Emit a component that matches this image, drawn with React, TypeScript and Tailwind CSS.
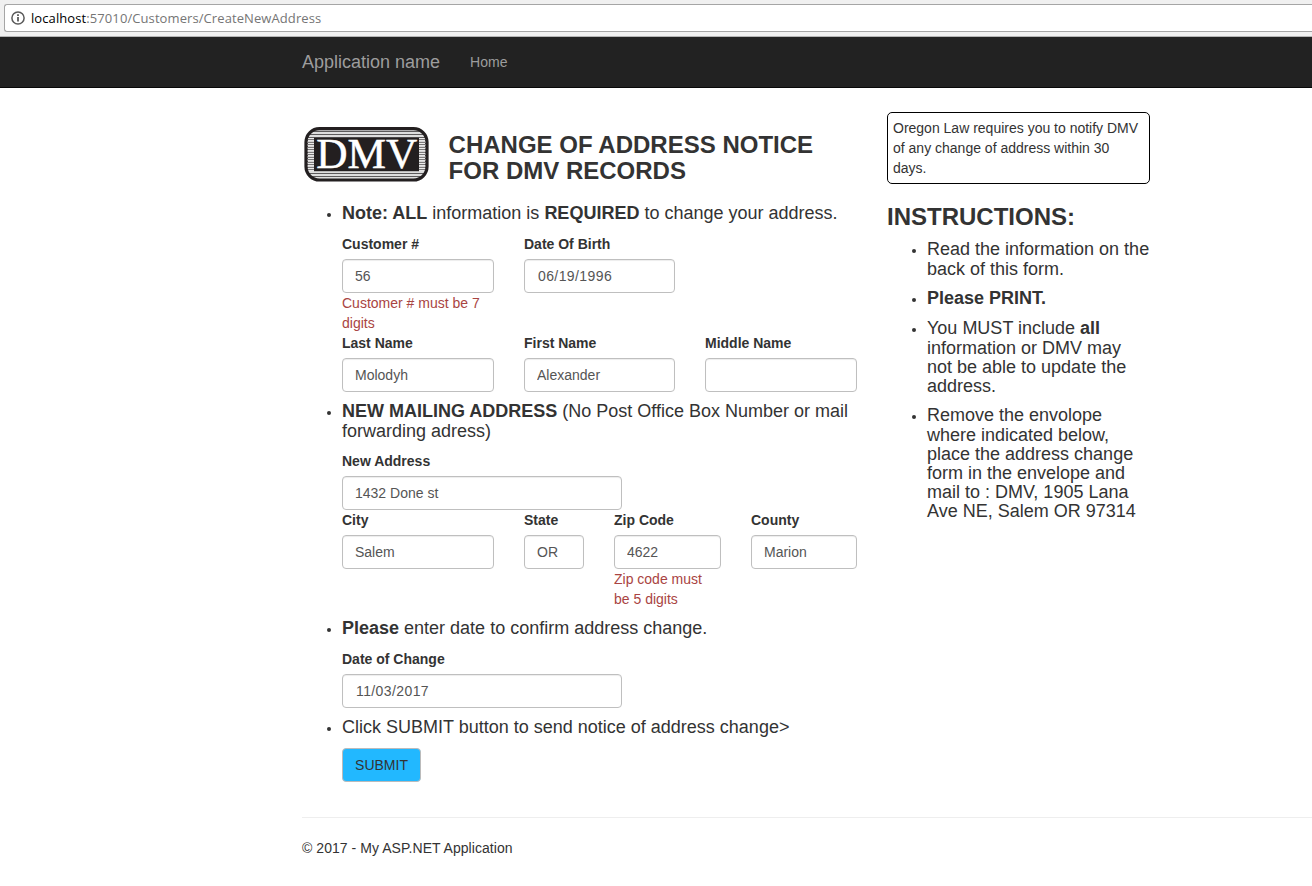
import type { ReactNode } from "react";

function Field({
  label,
  value,
  className,
  error,
  inputClass = "px-3",
}: {
  label: string;
  value: string;
  className: string;
  error?: ReactNode;
  inputClass?: string;
}) {
  return (
    <div className={`flex shrink-0 flex-col ${className}`}>
      <label className="mb-[5px] h-5 font-bold whitespace-nowrap">{label}</label>
      <input
        type="text"
        defaultValue={value}
        className={`h-[34px] w-full rounded-[4px] border border-[#bfbfbf] bg-white text-[14px] text-[#555] shadow-[inset_0_1px_1px_rgba(0,0,0,0.075)] outline-none ${inputClass}`}
      />
      {error && <span className="text-[#a94442]">{error}</span>}
    </div>
  );
}

function Bullet({ children, className = "" }: { children: ReactNode; className?: string }) {
  return (
    <div className={`flex pt-px text-[18px] leading-[19.8px] whitespace-nowrap ${className}`}>
      <span className="mt-[9px] mr-[11px] ml-[25px] size-1 shrink-0 rounded-full bg-[#333]" />
      <h4>{children}</h4>
    </div>
  );
}

function Instruction({ children, className = "" }: { children: ReactNode; className?: string }) {
  return (
    <li className={`flex ${className}`}>
      <span className="mt-[9px] mr-[11px] ml-[25px] size-1 shrink-0 rounded-full bg-[#333]" />
      <h4>{children}</h4>
    </li>
  );
}

function DmvLogo() {
  return (
    <svg width="126" height="58" viewBox="0 0 126 58" className="mt-[1px] ml-[1px] shrink-0">
      <defs>
        <pattern id="stripes" y="1" width="4" height="3" patternUnits="userSpaceOnUse">
          <rect width="4" height="3" fill="#fff" />
          <rect width="4" height="1.4" y="0.8" fill="#5c5a5b" />
        </pattern>
        <pattern id="side-stripes" width="4" height="2.5" patternUnits="userSpaceOnUse">
          <rect width="4" height="2.5" fill="#fff" />
          <rect width="4" height="1" y="0.7" fill="#4a4849" />
        </pattern>
      </defs>
      <rect x="3" y="2.6" width="121" height="51.4" rx="13.5" fill="url(#stripes)" />
      <rect x="5" y="12" width="117" height="33" fill="url(#side-stripes)" />
      <rect x="3" y="2.6" width="121" height="51.4" rx="13.5" fill="none" stroke="#231f20" strokeWidth="3.2" />
      <rect x="11" y="11.7" width="105" height="33.5" fill="#231f20" />
      <text
        x="63.8"
        y="41.7"
        textAnchor="middle"
        textLength="101"
        lengthAdjust="spacingAndGlyphs"
        fontFamily="Liberation Serif"
        fontSize="42"
        fill="#fff"
        stroke="#fff"
        strokeWidth="0.5"
      >
        DMV
      </text>
    </svg>
  );
}

export default function App() {
  return (
    <div className="h-[886px] w-full overflow-hidden bg-white font-['Liberation_Sans',Arial,sans-serif] text-[14px] leading-5 text-[#333]">
      <div className="flex h-[37px] border-b border-[#b5b5b5] bg-[#f0f0f0] pt-1 pl-1">
        <div className="flex h-7 w-full items-center rounded-l-[3px] border border-r-0 border-[#a5a5a5] bg-white pl-[6px] font-['Open_Sans',sans-serif] text-[13px] tracking-[0.09px] text-[#757575]">
          <svg width="14" height="14" viewBox="0 0 14 14" className="mr-[6px]">
            <circle cx="7" cy="7" r="6.1" fill="none" stroke="#5a5a5a" strokeWidth="1.5" />
            <path d="M7 6v4.5M7 3.3v1.6" stroke="#5a5a5a" strokeWidth="1.8" />
          </svg>
          <span>
            <span className="text-black">localhost</span>:57010/Customers/CreateNewAddress
          </span>
        </div>
      </div>

      <nav className="flex h-[51px] items-center border-b border-[#080808] bg-[#222] pl-[302px] text-[#9d9d9d]">
        <span className="text-[18px]">Application name</span>
        <span className="ml-[30px]">Home</span>
      </nav>

      <div className="flex h-[729px] pl-[302px]">
        <main className="w-[555px] shrink-0 pt-[37px]">
          <div className="flex h-[78px]">
            <DmvLogo />
            <h3 className="mt-[7px] ml-[19.6px] text-[24px] leading-[26px] font-bold whitespace-nowrap">
              CHANGE OF ADDRESS NOTICE
              <br />
              FOR DMV RECORDS
            </h3>
          </div>

          <Bullet className="h-[31px]">
            <b>Note: ALL</b> information is <b>REQUIRED</b> to change your address.
          </Bullet>
          <div className="flex h-[99px] gap-[30px] pl-10">
            <Field
              className="w-[152px]"
              label="Customer #"
              value="56"
              error={
                <>
                  Customer # must be 7<br />
                  digits
                </>
              }
            />
            <Field
              className="w-[151px]"
              label="Date Of Birth"
              value="06/19/1996"
              inputClass="pl-[13px] tracking-[0.4px]"
            />
          </div>
          <div className="flex h-[68px] gap-[30px] pl-10">
            <Field className="w-[152px]" label="Last Name" value="Molodyh" />
            <Field className="w-[151px]" label="First Name" value="Alexander" />
            <Field className="w-[152px]" label="Middle Name" value="" />
          </div>

          <Bullet className="h-[50px]">
            <b>NEW MAILING ADDRESS</b> (No Post Office Box Number or mail
            <br />
            forwarding adress)
          </Bullet>
          <div className="h-[59px] pl-10">
            <Field className="w-[280px]" label="New Address" value="1432 Done st" />
          </div>
          <div className="flex h-[108px] gap-[30px] pl-10">
            <Field className="w-[152px]" label="City" value="Salem" />
            <Field className="w-[60px]" label="State" value="OR" />
            <Field
              className="w-[107px]"
              label="Zip Code"
              value="4622"
              error={
                <>
                  Zip code must
                  <br />
                  be 5 digits
                </>
              }
            />
            <Field className="w-[106px]" label="County" value="Marion" />
          </div>

          <Bullet className="h-[31px]">
            <b>Please</b> enter date to confirm address change.
          </Bullet>
          <div className="h-[68px] pl-10">
            <Field
              className="w-[280px]"
              label="Date of Change"
              value="11/03/2017"
              inputClass="pl-[13px] tracking-[0.4px]"
            />
          </div>

          <Bullet className="h-[31px]">Click SUBMIT button to send notice of address change&gt;</Bullet>
          <button className="ml-10 block h-[34px] w-[79px] rounded-[4px] border border-[#bbb] bg-[#22b8ff] text-center">
            SUBMIT
          </button>
        </main>

        <aside className="ml-[30px] w-[263px] shrink-0 pt-6">
          <div className="h-[72px] rounded-[5px] border border-black px-[5px] py-[5px] whitespace-nowrap">
            Oregon Law requires you to notify DMV
            <br />
            of any change of address within 30
            <br />
            days.
          </div>
          <h3 className="mt-5 text-[24px] leading-[26px] font-bold">INSTRUCTIONS:</h3>
          <ul className="mt-[10.3px] text-[18px] leading-[19.2px] whitespace-nowrap">
            <Instruction className="h-[49px]">
              Read the information on the
              <br />
              back of this form.
            </Instruction>
            <Instruction className="h-[30px]">
              <b>Please PRINT.</b>
            </Instruction>
            <Instruction className="h-[87px]">
              You MUST include <b>all</b>
              <br />
              information or DMV may
              <br />
              not be able to update the
              <br />
              address.
            </Instruction>
            <Instruction>
              Remove the envolope
              <br />
              where indicated below,
              <br />
              place the address change
              <br />
              form in the envelope and
              <br />
              mail to : DMV, 1905 Lana
              <br />
              Ave NE, Salem OR 97314
            </Instruction>
          </ul>
        </aside>
      </div>

      <footer className="ml-[302px] border-t border-[#eee] pt-5 tracking-[0.05px]">
        © 2017 - My ASP.NET Application
      </footer>
    </div>
  );
}
